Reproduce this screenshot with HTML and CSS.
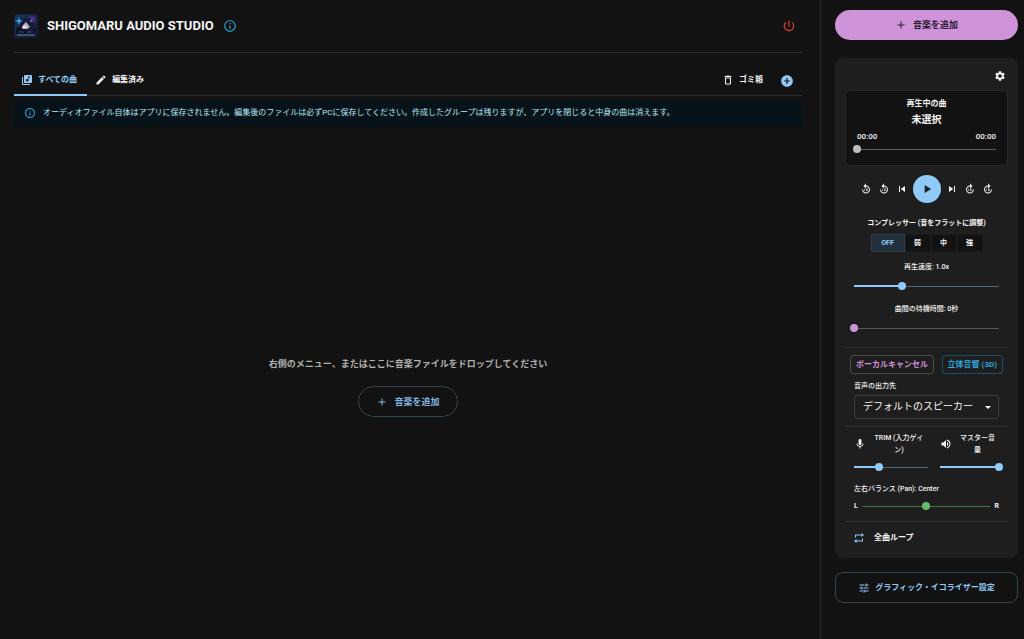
FILE: index.html
```html
<!DOCTYPE html>
<html lang="ja">
<head>
    <meta charset="UTF-8">
    <meta name="viewport" content="width=device-width, initial-scale=1.0">
    <title>Shigomaru Audio Studio</title>
    <link rel="stylesheet" href="styles.css">
</head>
<body>
    <!-- icons -->
    <svg class="sprite" aria-hidden="true">
        <symbol id="i-info" viewBox="0 0 24 24"><path d="M11 7h2v2h-2zm0 4h2v6h-2zm1-9C6.480 2 2 6.480 2 12s4.480 10 10 10 10-4.480 10-10S17.520 2 12 2m0 18c-4.410 0-8-3.590-8-8s3.590-8 8-8 8 3.590 8 8-3.590 8-8 8"/></symbol>
        <symbol id="i-power" viewBox="0 0 24 24"><path d="M13 3h-2v10h2zm4.830 2.170-1.420 1.420C17.990 7.860 19 9.810 19 12c0 3.870-3.130 7-7 7s-7-3.130-7-7c0-2.190 1.010-4.140 2.580-5.420L6.170 5.170C4.230 6.820 3 9.260 3 12c0 4.970 4.030 9 9 9s9-4.030 9-9c0-2.740-1.230-5.180-3.170-6.830"/></symbol>
        <symbol id="i-library" viewBox="0 0 24 24"><path d="M20 2H8c-1.100 0-2 .9-2 2v12c0 1.100.9 2 2 2h12c1.100 0 2-.9 2-2V4c0-1.100-.9-2-2-2m-2 5h-3v5.500c0 1.380-1.120 2.500-2.500 2.500S10 13.880 10 12.500s1.120-2.500 2.500-2.500c.57 0 1.080.19 1.500.51V5h4zM4 6H2v14c0 1.100.9 2 2 2h14v-2H4z"/></symbol>
        <symbol id="i-edit" viewBox="0 0 24 24"><path d="M3 17.250V21h3.750L17.810 9.940l-3.750-3.750zM20.710 7.040c.39-.39.39-1.020 0-1.410l-2.340-2.340a.996.996 0 0 0-1.410 0l-1.830 1.830 3.750 3.750z"/></symbol>
        <symbol id="i-trash" viewBox="0 0 24 24"><path d="M6 19c0 1.100.9 2 2 2h8c1.100 0 2-.9 2-2V7H6zM8 9h8v10H8zm7.500-5-1-1h-5l-1 1H5v2h14V4z"/></symbol>
        <symbol id="i-add-circle" viewBox="0 0 24 24"><path d="M12 2C6.480 2 2 6.480 2 12s4.480 10 10 10 10-4.480 10-10S17.520 2 12 2m5 11h-4v4h-2v-4H7v-2h4V7h2v4h4z"/></symbol>
        <symbol id="i-add" viewBox="0 0 24 24"><path d="M19 13h-6v6h-2v-6H5v-2h6V5h2v6h6z"/></symbol>
        <symbol id="i-gear" viewBox="0 0 24 24"><path d="M19.140 12.940c.04-.3.06-.61.06-.94 0-.32-.02-.64-.07-.94l2.030-1.580c.18-.14.23-.41.12-.61l-1.920-3.320c-.12-.22-.37-.29-.59-.22l-2.390.96c-.5-.38-1.030-.7-1.620-.94l-.36-2.540c-.04-.24-.24-.41-.48-.41h-3.840c-.24 0-.43.17-.47.41l-.36 2.540c-.59.24-1.130.57-1.620.94l-2.390-.96c-.22-.08-.47 0-.59.22L2.740 8.870c-.12.21-.08.47.12.61l2.030 1.580c-.05.3-.09.63-.09.94s.02.64.07.94l-2.030 1.580c-.18.14-.23.41-.12.61l1.920 3.320c.12.22.37.29.59.22l2.390-.96c.5.38 1.030.7 1.620.94l.36 2.540c.05.24.24.41.48.41h3.840c.24 0 .44-.17.47-.41l.36-2.540c.59-.24 1.130-.56 1.620-.94l2.390.96c.22.08.47 0 .59-.22l1.920-3.320c.12-.22.07-.47-.12-.61zM12 15.600c-1.980 0-3.600-1.620-3.600-3.600s1.620-3.600 3.600-3.600 3.600 1.620 3.600 3.600-1.620 3.600-3.600 3.600"/></symbol>
        <symbol id="i-replay" viewBox="0 0 24 24"><path d="M12 5V1L7 6l5 5V7c3.310 0 6 2.690 6 6s-2.690 6-6 6-6-2.690-6-6H4c0 4.420 3.580 8 8 8s8-3.580 8-8-3.580-8-8-8M9 11h1v5H9zm3 0h3v5h-3zm1 1v3h1v-3z"/></symbol>
        <symbol id="i-forward" viewBox="0 0 24 24"><path d="M12 5V1l5 5-5 5V7c-3.310 0-6 2.690-6 6s2.690 6 6 6 6-2.690 6-6h2c0 4.420-3.580 8-8 8s-8-3.580-8-8 3.580-8 8-8M9 11h1v5H9zm3 0h3v5h-3zm1 1v3h1v-3z"/></symbol>
        <symbol id="i-prev" viewBox="0 0 24 24"><path d="M6 6h2v12H6zm3.500 6 8.500 6V6z"/></symbol>
        <symbol id="i-next" viewBox="0 0 24 24"><path d="m6 18 8.500-6L6 6zM16 6v12h2V6z"/></symbol>
        <symbol id="i-play" viewBox="0 0 24 24"><path d="M8 5v14l11-7z"/></symbol>
        <symbol id="i-mic" viewBox="0 0 24 24"><path d="M12 14c1.660 0 3-1.340 3-3V5c0-1.660-1.340-3-3-3S9 3.340 9 5v6c0 1.660 1.340 3 3 3m5.300-3c0 3-2.540 5.100-5.300 5.100S6.700 14 6.700 11H5c0 3.410 2.720 6.230 6 6.720V21h2v-3.280c3.280-.48 6-3.300 6-6.720z"/></symbol>
        <symbol id="i-volume" viewBox="0 0 24 24"><path d="M3 9v6h4l5 5V4L7 9zm13.500 3c0-1.770-1.020-3.290-2.500-4.030v8.050c1.480-.73 2.500-2.250 2.500-4.020M14 3.230v2.060c2.890.86 5 3.540 5 6.710s-2.110 5.850-5 6.710v2.060c4.010-.91 7-4.490 7-8.770s-2.990-7.860-7-8.770"/></symbol>
        <symbol id="i-repeat" viewBox="0 0 24 24"><path d="M4 11V5h13V2l5 4-5 4V7H6v4zM20 13v6H7v3l-5-4 5-4v3h11v-4z"/></symbol>
        <symbol id="i-tune" viewBox="0 0 24 24"><path d="M3 17v2h6v-2zM3 5v2h10V5zm10 16v-2h8v-2h-8v-2h-2v6zM7 9v2H3v2h4v2h2V9zm14 4v-2H11v2zm-6-4h2V7h4V5h-4V3h-2z"/></symbol>
    </svg>

    <div class="app">
        <main class="main">
            <header class="header">
                <svg class="logo" viewBox="0 0 24 24" aria-hidden="true">
                    <defs>
                        <linearGradient id="night" x1="0" y1="0" x2="1" y2="1">
                            <stop offset="0" stop-color="#14365c"/>
                            <stop offset=".5" stop-color="#20234a"/>
                            <stop offset="1" stop-color="#101b30"/>
                        </linearGradient>
                    </defs>
                    <rect width="24" height="24" rx="3" fill="#0f2236"/>
                    <rect x="1" y="1" width="22" height="22" rx="2" fill="url(#night)"/>
                    <path d="M2 14q5-3 9 1t11-1v6H2z" fill="#0b1526"/>
                    <path d="M15 2l6 1v6l-4-2z" fill="#43307a"/>
                    <path d="M7 11q0-7 5-7t6 6l2 4-4 1H8z" fill="#171a33"/>
                    <path d="M9 11l3-3 4 5-3 2-5-1z" fill="#c3aec9"/>
                    <path d="M8 13l3-2 2 3-4 1z" fill="#e5dcec"/>
                    <path d="M5 3l1 3 3 1-3 1-1 3-1-3-3-1 3-1z" fill="#35a7e8"/>
                    <circle cx="17" cy="7" r="1" fill="#7a69cf"/>
                    <path d="M3 21h18" stroke="#71829a" stroke-width="1"/>
                    <path d="M5 18h5M13 18h6" stroke="#31517a" stroke-width="1"/>
                </svg>
                <h1>SHIGOMARU AUDIO STUDIO</h1>
                <button class="icon-btn info" type="button" aria-label="情報"><svg><use href="#i-info"/></svg></button>
                <button class="icon-btn power" type="button" aria-label="終了"><svg><use href="#i-power"/></svg></button>
            </header>

            <nav class="tabs">
                <button class="tab active" type="button"><svg><use href="#i-library"/></svg>すべての曲</button>
                <button class="tab" type="button"><svg><use href="#i-edit"/></svg>編集済み</button>
                <button class="tab trash" type="button"><svg><use href="#i-trash"/></svg>ゴミ箱</button>
                <button class="icon-btn add-group" type="button" aria-label="グループを追加"><svg><use href="#i-add-circle"/></svg></button>
            </nav>

            <div class="alert">
                <svg><use href="#i-info"/></svg>
                <p>オーディオファイル自体はアプリに保存されません。編集後のファイルは必ずPCに保存してください。作成したグループは残りますが、アプリを閉じると中身の曲は消えます。</p>
            </div>

            <section class="empty">
                <p>右側のメニュー、またはここに音楽ファイルをドロップしてください</p>
                <button class="btn-outline" type="button"><svg><use href="#i-add"/></svg>音楽を追加</button>
            </section>
        </main>

        <aside class="sidebar">
            <button class="btn-add" type="button"><svg><use href="#i-add"/></svg>音楽を追加</button>

            <div class="card">
                <button class="icon-btn gear" type="button" aria-label="設定"><svg><use href="#i-gear"/></svg></button>

                <div class="player">
                    <p class="now">再生中の曲</p>
                    <p class="track-name">未選択</p>
                    <div class="times"><span>00:00</span><span>00:00</span></div>
                    <input class="seek" type="range" min="0" max="100" value="0" aria-label="再生位置" disabled>
                </div>

                <div class="controls">
                    <button type="button" aria-label="10秒戻る"><svg><use href="#i-replay"/></svg></button>
                    <button type="button" aria-label="5秒戻る"><svg><use href="#i-replay"/></svg></button>
                    <button type="button" aria-label="前の曲"><svg><use href="#i-prev"/></svg></button>
                    <button class="play" type="button" aria-label="再生"><svg><use href="#i-play"/></svg></button>
                    <button type="button" aria-label="次の曲"><svg><use href="#i-next"/></svg></button>
                    <button type="button" aria-label="5秒進む"><svg><use href="#i-forward"/></svg></button>
                    <button type="button" aria-label="10秒進む"><svg><use href="#i-forward"/></svg></button>
                </div>

                <p class="comp-label">コンプレッサー (音をフラットに調整)</p>
                <div class="toggle-group">
                    <button class="selected" type="button">OFF</button>
                    <button type="button">弱</button>
                    <button type="button">中</button>
                    <button type="button">強</button>
                </div>

                <div class="field speed">
                    <label for="speed">再生速度: 1.0x</label>
                    <input id="speed" type="range" min="0.5" max="2" step="0.1" value="1">
                </div>
                <div class="field wait">
                    <label for="wait">曲間の待機時間: 0秒</label>
                    <input id="wait" class="purple" type="range" min="0" max="10" value="0">
                </div>

                <hr>

                <div class="effects">
                    <button class="vocal" type="button">ボーカルキャンセル</button>
                    <button class="surround" type="button">立体音響 (3D)</button>
                </div>

                <div class="output">
                    <label for="output">音声の出力先</label>
                    <div class="select-wrap">
                        <select id="output">
                            <option>デフォルトのスピーカー</option>
                        </select>
                    </div>
                </div>

                <hr>

                <div class="levels">
                    <div class="level">
                        <label for="trim"><svg><use href="#i-mic"/></svg><span>TRIM (入力ゲイン)</span></label>
                        <input id="trim" type="range" min="0" max="3" step="0.1" value="1">
                    </div>
                    <div class="level">
                        <label for="master"><svg><use href="#i-volume"/></svg><span>マスター音量</span></label>
                        <input id="master" type="range" min="0" max="100" value="100">
                    </div>
                </div>

                <div class="pan">
                    <label for="pan">左右バランス (Pan): Center</label>
                    <div class="pan-row">
                        <b>L</b>
                        <input id="pan" class="green" type="range" min="-1" max="1" step="0.1" value="0">
                        <b>R</b>
                    </div>
                </div>

                <hr>

                <button class="loop" type="button"><svg><use href="#i-repeat"/></svg>全曲ループ</button>
            </div>

            <button class="btn-eq" type="button"><svg><use href="#i-tune"/></svg>グラフィック・イコライザー設定</button>
        </aside>
    </div>

    <script>
        // スライダーの塗り幅を値に合わせる
        function updateFill(range) {
            const fill = (range.value - range.min) / (range.max - range.min);
            range.style.setProperty('--fill', fill);
        }

        document.querySelectorAll('input[type="range"]').forEach(function (range) {
            updateFill(range);
            range.addEventListener('input', function () {
                updateFill(range);
            });
        });
    </script>
</body>
</html>
```
FILE: styles.css
```css
* {
    box-sizing: border-box;
}

body {
    margin: 0;
    background: #121212;
    color: #f5f5f5;
    font-family: Roboto, "Noto Sans CJK JP", sans-serif;
    font-size: 8px;
    line-height: 12px;
}

h1, p {
    margin: 0;
}

button, select, input {
    font: inherit;
    color: inherit;
}

button {
    display: flex;
    align-items: center;
    justify-content: center;
    padding: 0;
    border: 0;
    background: none;
    font-weight: bold;
    white-space: nowrap;
    cursor: pointer;
}

svg {
    width: 12px;
    height: 12px;
    flex: none;
    fill: currentColor;
}

hr {
    width: 100%;
    height: 1px;
    margin: 0;
    border: 0;
    background: #303030;
}

.sprite {
    position: absolute;
    width: 0;
    height: 0;
}

.app {
    display: flex;
    min-height: 100vh;
}

/* main */
.main {
    flex: 1;
    min-width: 0;
    display: flex;
    flex-direction: column;
    padding: 14px 18px 14px 14px;
}

.header {
    display: flex;
    align-items: center;
    padding-bottom: 14px;
    border-bottom: 1px solid #272727;
}

.logo {
    width: 24px;
    height: 24px;
    margin-right: 9px;
}

.header h1 {
    font-size: 13px;
    line-height: 16px;
}

.icon-btn {
    width: 16px;
    height: 16px;
}

.info {
    margin-left: 8px;
    color: #29a3dc;
}

.info svg, .power svg, .add-group svg {
    width: 14px;
    height: 14px;
}

.power {
    margin-left: auto;
    margin-right: 5px;
    color: #d9402f;
}

.tabs {
    display: flex;
    align-items: center;
    margin-top: 12px;
    height: 31px;
    border-bottom: 1px solid #272727;
}

.tab {
    height: 31px;
    padding: 2px 8px 0;
    gap: 5px;
    border-bottom: 2px solid transparent;
}

.tab.active {
    padding: 2px 10px 0 7px;
    color: #90caf9;
    border-color: #90caf9;
}

.tab.trash {
    margin-left: auto;
}

.add-group {
    margin: 2px 7px 0 8px;
    color: #90caf9;
}

.alert {
    display: flex;
    align-items: center;
    gap: 7px;
    margin-top: 4px;
    padding: 7px 10px;
    border-radius: 3px;
    background: #071318;
    color: #b8e7fb;
}

.alert svg {
    color: #29a3dc;
}

.empty {
    flex: 1;
    display: flex;
    flex-direction: column;
    align-items: center;
    justify-content: center;
    gap: 14px;
    padding-top: 22px;
    color: #b0b0b0;
    font-size: 9px;
    line-height: 16px;
    font-weight: bold;
}

.btn-outline {
    gap: 6px;
    width: 100px;
    height: 31px;
    border: 1px solid #344650;
    border-radius: 16px;
    color: #82b6e0;
}

/* sidebar */
.sidebar {
    width: 204px;
    flex: none;
    padding: 10px 6px 10px 14px;
    border-left: 1px solid #272727;
}

.btn-add {
    gap: 6px;
    width: 100%;
    height: 30px;
    border-radius: 15px;
    background: #ce93d8;
    color: #2a1a2e;
    font-size: 9px;
}

.card {
    display: flex;
    flex-direction: column;
    margin: 18px 0 14px;
    padding: 10px 10px 14px;
    border-radius: 8px;
    background: #1e1e1e;
}

.gear {
    align-self: flex-end;
}

.player {
    margin-top: 6px;
    padding: 7px 11px 10px;
    border: 1px solid #292929;
    border-radius: 5px;
    background: #121212;
    text-align: center;
}

.now {
    font-weight: bold;
}

.track-name {
    margin: 2px 0;
    font-size: 10px;
    line-height: 16px;
    font-weight: bold;
}

.times {
    display: flex;
    justify-content: space-between;
    padding-top: 1px;
    font-weight: 500;
}

/* sliders: the rail is inset by half a thumb on each side */
input[type="range"] {
    --color: #90caf9;
    --rail: #54677a;
    -webkit-appearance: none;
    appearance: none;
    display: block;
    width: calc(100% + 8px);
    height: 12px;
    margin: 0 -4px;
    background:
        linear-gradient(var(--color), var(--color)) 4px 5px / calc((100% - 8px) * var(--fill)) 2px no-repeat,
        linear-gradient(var(--rail), var(--rail)) 4px 6px / calc(100% - 8px) 1px no-repeat;
}

input[type="range"]::-webkit-slider-thumb {
    -webkit-appearance: none;
    width: 8px;
    height: 8px;
    border-radius: 50%;
    background: var(--color);
}

input[type="range"].seek {
    --color: #bdbdbd;
    --rail: #5c5c5c;
}

input[type="range"].purple {
    --color: #ce93d8;
    --rail: #5c5560;
}

input[type="range"].green {
    --color: #66bb6a;
    --rail: #40754a;
    flex: 1;
    min-width: 0;
    width: auto;
    margin: 0;
    background: linear-gradient(var(--rail), var(--rail)) 4px 6px / calc(100% - 8px) 1px no-repeat;
}

.controls {
    display: flex;
    align-items: center;
    justify-content: center;
    gap: 4px;
    margin-top: 9px;
}

.controls button {
    width: 14px;
    height: 14px;
}

.controls svg {
    width: 12px;
    height: 12px;
}

.controls .play {
    width: 28px;
    height: 28px;
    border-radius: 50%;
    background: #90caf9;
    color: #16222c;
}

.controls .play svg {
    width: 14px;
    height: 14px;
}

.comp-label {
    margin-top: 14px;
    font-size: 7px;
    font-weight: bold;
    text-align: center;
}

.toggle-group {
    display: flex;
    align-self: center;
    margin-top: 5px;
    border-radius: 2px;
    background: #121212;
    overflow: hidden;
}

.toggle-group button {
    width: 26px;
    height: 18px;
    border: 1px solid #191919;
    font-size: 7px;
}

.toggle-group .selected {
    width: 34px;
    border-color: #30404d;
    background: #22303b;
    color: #90caf9;
}

.field {
    padding: 0 9px;
    font-size: 7px;
    font-weight: 500;
    text-align: center;
}

.field label {
    display: block;
    margin-bottom: 7px;
}

.speed {
    margin-top: 9px;
}

.wait {
    margin: 11px 0 13px;
}

.effects {
    display: flex;
    justify-content: space-between;
    margin-top: 7px;
    padding: 0 5px;
}

.effects button {
    height: 19px;
    padding: 0 5px;
    border: 1px solid #4a4a4a;
    border-radius: 3px;
    color: #ce93d8;
}

.effects .surround {
    border-color: #1e4f66;
    color: #29a3dc;
}

.output {
    margin: 6px 0 7px;
    padding: 0 9px;
}

.output label {
    display: block;
    margin-bottom: 3px;
    font-size: 7px;
    font-weight: 500;
}

.select-wrap {
    position: relative;
}

.select-wrap::after {
    content: "";
    position: absolute;
    right: 8px;
    top: 11px;
    border: 3px solid transparent;
    border-top-color: #fff;
    border-bottom: 0;
    pointer-events: none;
}

.output select {
    -webkit-appearance: none;
    appearance: none;
    display: block;
    width: 100%;
    height: 24px;
    padding: 0 8px;
    border: 1px solid #3c3c3c;
    border-radius: 3px;
    background: #1e1e1e;
    font-size: 10px;
}

.levels {
    display: grid;
    grid-template-columns: 5fr 4fr;
    gap: 12px;
    margin-top: 5px;
    padding: 0 9px;
    font-size: 7px;
    font-weight: 500;
    text-align: center;
}

.level label {
    display: flex;
    align-items: center;
    gap: 4px;
    margin-bottom: 5px;
}

.level span {
    flex: 1;
    padding: 0 3px;
}

.pan {
    margin: 10px 0 9px;
    padding: 0 9px;
    font-size: 7px;
    font-weight: 500;
}

.pan label {
    display: block;
    margin-bottom: 5px;
}

.pan-row {
    display: flex;
    gap: 1px;
}

.loop {
    align-self: flex-start;
    gap: 9px;
    margin: 10px 0 0 8px;
}

.loop svg {
    color: #90caf9;
}

.btn-eq {
    gap: 5px;
    width: 100%;
    height: 31px;
    border: 1px solid #344650;
    border-radius: 8px;
    color: #90caf9;
}
```
